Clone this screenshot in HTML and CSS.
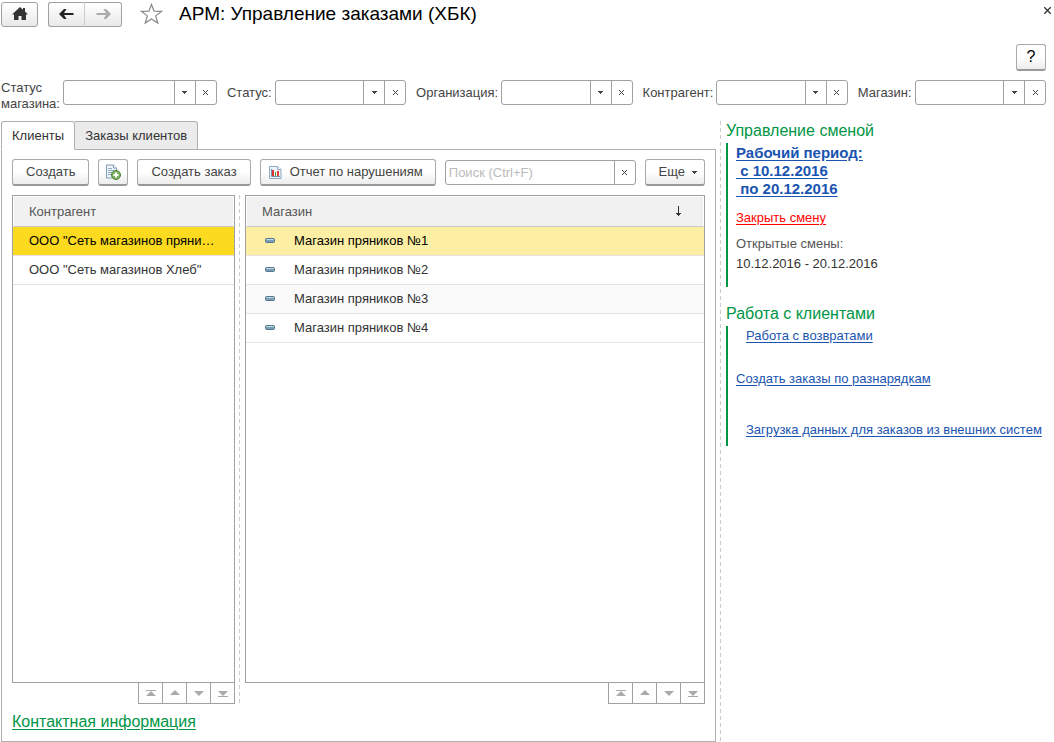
FILE: index.html
```html
<!DOCTYPE html>
<html lang="ru">
<head>
<meta charset="utf-8">
<title>АРМ: Управление заказами (ХБК)</title>
<link rel="stylesheet" href="styles.css">
</head>
<body>
<svg class="defs" aria-hidden="true">
  <symbol id="caret" viewBox="0 0 5 3"><path d="M0 0h5v1H4v1H3v1H2V2H1V1H0z"/></symbol>
  <symbol id="cross" viewBox="0 0 7 7"><path d="M1 1l5 5M6 1l-5 5" fill="none" stroke="currentColor" stroke-width="1"/></symbol>
  <symbol id="up" viewBox="0 0 10 8"><path d="M5 1l5 5H0z"/></symbol>
  <symbol id="down" viewBox="0 0 10 8"><path d="M5 7L0 2h10z"/></symbol>
  <symbol id="first" viewBox="0 0 10 8"><path d="M0 1h10v1H0zM5 2l5 5H0z"/></symbol>
  <symbol id="last" viewBox="0 0 10 8"><path d="M0 7h10v1H0zM5 7L0 2h10z"/></symbol>
  <symbol id="item" viewBox="0 0 10 5"><rect x=".5" y=".5" width="9" height="4" rx="1" fill="#7d9db5" stroke="#55768f"/><path d="M1.500 1.500h7" stroke="#c5dbe8"/></symbol>
</svg>

<header class="header">
  <button class="nav-btn home" aria-label="Домой"><svg width="16" height="14" viewBox="0 0 16 14"><path d="M8 0l3 2.700V1h2v3.500L16 7.500h-2V13H9.500V9h-3v4H2V7.500H0z" fill="#333"/></svg></button>
  <div class="nav-pair">
    <button class="nav-btn" aria-label="Назад"><svg width="15" height="12" viewBox="0 0 15 12"><path d="M0 6l5-5h2.500L5 5h9.500v2H5l2.500 4H5z" fill="#222"/></svg></button>
    <button class="nav-btn" aria-label="Вперед"><svg width="15" height="12" viewBox="0 0 15 12"><path d="M15 6l-5-5H7.500L10 5H.5v2H10l-2.500 4H10z" fill="#aaa"/></svg></button>
  </div>
  <button class="plain star" aria-label="В избранное"><svg width="23" height="22" viewBox="0 0 23 22"><path d="M11.500 1.500l2.600 6.700 7.400.2-5.800 4.500 2.100 7.200-6.300-4.200-6.300 4.200 2.100-7.200L1.500 8.400l7.400-.2z" fill="none" stroke="#888" stroke-width="1.200"/></svg></button>
  <h1 class="title">АРМ: Управление заказами (ХБК)</h1>
  <button class="plain close" aria-label="Закрыть"><svg width="9" height="9" viewBox="0 0 7 7"><use href="#cross"/></svg></button>
</header>

<div class="help-row"><button class="btn help">?</button></div>

<form class="filters">
  <label class="label-wrap" for="f1">Статус магазина:</label>
  <div class="combo combo-wide"><input id="f1" type="text"><button type="button" aria-label="Выбрать"><svg class="caret"><use href="#caret"/></svg></button><button type="button" aria-label="Очистить"><svg class="cross"><use href="#cross"/></svg></button></div>
  <label for="f2">Статус:</label>
  <div class="combo"><input id="f2" type="text"><button type="button" aria-label="Выбрать"><svg class="caret"><use href="#caret"/></svg></button><button type="button" aria-label="Очистить"><svg class="cross"><use href="#cross"/></svg></button></div>
  <label for="f3">Организация:</label>
  <div class="combo"><input id="f3" type="text"><button type="button" aria-label="Выбрать"><svg class="caret"><use href="#caret"/></svg></button><button type="button" aria-label="Очистить"><svg class="cross"><use href="#cross"/></svg></button></div>
  <label for="f4">Контрагент:</label>
  <div class="combo"><input id="f4" type="text"><button type="button" aria-label="Выбрать"><svg class="caret"><use href="#caret"/></svg></button><button type="button" aria-label="Очистить"><svg class="cross"><use href="#cross"/></svg></button></div>
  <label for="f5">Магазин:</label>
  <div class="combo"><input id="f5" type="text"><button type="button" aria-label="Выбрать"><svg class="caret"><use href="#caret"/></svg></button><button type="button" aria-label="Очистить"><svg class="cross"><use href="#cross"/></svg></button></div>
</form>

<div class="content">
  <main class="main">
    <div class="tabs" role="tablist">
      <button class="tab tab-active" role="tab" aria-selected="true">Клиенты</button>
      <button class="tab" role="tab" aria-selected="false">Заказы клиентов</button>
    </div>
    <section class="panel">
      <div class="toolbar">
        <button class="btn">Создать</button>
        <button class="btn btn-icon" aria-label="Создать копированием"><svg width="16" height="16" viewBox="0 0 16 16"><path d="M1.500 1h7l3 3v10h-10z" fill="#eef4f9" stroke="#7f9db5"/><path d="M8.500 1v3h3" fill="#fff" stroke="#7f9db5"/><path d="M3 4.500h4M3 6.500h6M3 8.500h4M3 10.500h3" stroke="#8fabc0"/><circle cx="11" cy="11" r="4.500" fill="#7db45c" stroke="#4f7f3c"/><path d="M11 8.500v5M8.500 11h5" stroke="#fff" stroke-width="2"/></svg></button>
        <button class="btn">Создать заказ</button>
        <button class="btn btn-report"><svg width="13" height="15" viewBox="0 0 13 15"><path d="M.5 1.500h8l3.500 3v9H.5z" fill="#eef4f9" stroke="#8fa9bd"/><path d="M8.500 1.500v3H12" fill="#fff" stroke="#8fa9bd"/><path d="M3 5h2v6H3z" fill="#d33"/><path d="M6 7h1v4H6z" fill="#4a9a45"/><path d="M8 6h2v5H8z" fill="#e0432f"/><path d="M2.500 4v7.500H11" fill="none" stroke="#7890a5"/></svg>Отчет по нарушениям</button>
        <div class="combo search"><input type="text" aria-label="Поиск" placeholder="Поиск (Ctrl+F)"><button aria-label="Очистить"><svg class="cross"><use href="#cross"/></svg></button></div>
        <button class="btn btn-more">Еще<svg class="caret"><use href="#caret"/></svg></button>
      </div>
      <div class="lists">
        <div class="list list-left">
          <div class="grid">
            <table>
              <thead><tr><th>Контрагент</th></tr></thead>
              <tbody>
                <tr class="current"><td>ООО "Сеть магазинов пряников"</td></tr>
                <tr><td>ООО "Сеть магазинов Хлеб"</td></tr>
              </tbody>
            </table>
          </div>
          <div class="pager">
            <button aria-label="В начало"><svg><use href="#first"/></svg></button><button aria-label="Вверх"><svg><use href="#up"/></svg></button><button aria-label="Вниз"><svg><use href="#down"/></svg></button><button aria-label="В конец"><svg><use href="#last"/></svg></button>
          </div>
        </div>
        <div class="splitter"></div>
        <div class="list list-right">
          <div class="grid">
            <table>
              <thead><tr><th><div class="sort-head">Магазин<svg width="7" height="11" viewBox="0 0 7 11"><path d="M3 0h1v7h2v1H5v1H4v1H3V9H2V8H1V7h2z" fill="#333"/></svg></div></th></tr></thead>
              <tbody>
                <tr class="marked"><td><svg class="item"><use href="#item"/></svg>Магазин пряников №1</td></tr>
                <tr><td><svg class="item"><use href="#item"/></svg>Магазин пряников №2</td></tr>
                <tr class="odd"><td><svg class="item"><use href="#item"/></svg>Магазин пряников №3</td></tr>
                <tr><td><svg class="item"><use href="#item"/></svg>Магазин пряников №4</td></tr>
              </tbody>
            </table>
          </div>
          <div class="pager">
            <button aria-label="В начало"><svg><use href="#first"/></svg></button><button aria-label="Вверх"><svg><use href="#up"/></svg></button><button aria-label="Вниз"><svg><use href="#down"/></svg></button><button aria-label="В конец"><svg><use href="#last"/></svg></button>
          </div>
        </div>
      </div>
      <a class="contact" href="#">Контактная информация</a>
    </section>
  </main>

  <div class="splitter main-splitter"></div>

  <aside class="side">
    <h2>Управление сменой</h2>
    <div class="group group-shift">
      <a class="period" href="#">Рабочий период:
 с 10.12.2016
 по 20.12.2016</a>
      <a class="danger" href="#">Закрыть смену</a>
      <p class="caption">Открытые смены:</p>
      <p>10.12.2016 - 20.12.2016</p>
    </div>
    <h2>Работа с клиентами</h2>
    <div class="group group-clients">
      <a class="indent" href="#">Работа с возвратами</a>
      <a href="#">Создать заказы по разнарядкам</a>
      <a class="indent" href="#">Загрузка данных для заказов из внешних систем</a>
    </div>
  </aside>
</div>
</body>
</html>
```
FILE: styles.css
```css
* { box-sizing: border-box; }
body {
  margin: 0;
  min-height: 100vh;
  display: flex;
  flex-direction: column;
  padding: 1px 8px 0 1px;
  background: #fff;
  color: #333;
  font: 13px/16px "Liberation Sans", Arial, sans-serif;
}
button, input { font: inherit; color: inherit; margin: 0; }
button { padding: 0; }
svg { display: block; flex: none; fill: currentColor; }
h1, h2, p { margin: 0; font-weight: normal; }
a { color: #1a54b0; text-underline-offset: 2px; }
.defs { position: absolute; width: 0; height: 0; }
.caret { width: 5px; height: 3px; }
.cross { width: 7px; height: 7px; }

.header { display: flex; align-items: center; height: 26px; }
.nav-btn {
  display: flex;
  align-items: center;
  justify-content: center;
  width: 37px;
  height: 25px;
  border: 1px solid #a0a0a0;
  border-radius: 3px;
  background: linear-gradient(#fff, #e9e9e9);
}
.nav-pair { display: flex; margin-left: 10px; }
.nav-pair .nav-btn:first-child { border-radius: 3px 0 0 3px; border-right-color: #ccc; }
.nav-pair .nav-btn:last-child { border-radius: 0 3px 3px 0; border-left: 0; }
.plain { border: 0; background: none; }
.star { margin: 0 16px 0 18px; }
.title { font-size: 19px; line-height: 24px; color: #000; }
.close { align-self: flex-start; margin: 5px -6px 0 auto; color: #333; }

.help-row { display: flex; justify-content: flex-end; padding: 17px 0 9px; }
.btn {
  display: flex;
  align-items: center;
  justify-content: center;
  height: 27px;
  padding: 0 13px;
  border: 1px solid #aaa;
  border-bottom: 2px solid #999;
  border-radius: 3px;
  background: linear-gradient(#fff 50%, #ececec);
  color: #444;
  white-space: nowrap;
}
.help { width: 30px; padding: 0; font-size: 16px; color: #000; }

.filters { display: flex; align-items: flex-start; color: #444; }
.filters label { flex: none; margin-right: 3px; line-height: 25px; white-space: nowrap; }
.filters .label-wrap { width: 59px; white-space: normal; line-height: 16px; }
.combo {
  display: flex;
  flex: 132 1 0;
  min-width: 0;
  height: 25px;
  border: 1px solid #a0a0a0;
  border-radius: 3px;
  background: #fff;
}
.filters .combo:not(:last-child) { margin-right: 10px; }
.combo-wide { flex-grow: 155; }
.combo input { flex: 1; min-width: 0; border: 0; padding: 0 3px; background: none; outline: 0; }
.combo input::placeholder { color: #bbb; opacity: 1; }
.combo button {
  display: flex;
  align-items: center;
  justify-content: center;
  width: 21px;
  border: 0;
  border-left: 1px solid #a0a0a0;
  background: none;
  color: #444;
}

.content { flex: 1; display: flex; margin-top: 9px; }
.main { flex: 1; min-width: 0; display: flex; flex-direction: column; }
.tabs { display: flex; height: 29px; margin-bottom: -1px; z-index: 1; }
.tab {
  padding: 0 10px;
  border: 1px solid #b0b0b0;
  border-left-width: 0;
  border-radius: 0 3px 0 0;
  background: #ebebeb;
}
.tab-active {
  border-left-width: 1px;
  border-bottom-color: #fff;
  border-radius: 3px 3px 0 0;
  background: #fff;
}
.panel {
  flex: 1;
  display: flex;
  flex-direction: column;
  align-items: stretch;
  padding: 9px 10px;
  border: 1px solid #b0b0b0;
}
.toolbar { display: flex; align-items: center; gap: 9px; }
.btn-icon { width: 30px; padding: 0; }
.btn-report { padding: 0 12px 0 8px; gap: 8px; }
.btn-more { gap: 7px; padding: 0 7px 0 13px; }
.lists { flex: 1; display: flex; margin-top: 9px; }
.list { display: flex; flex-direction: column; min-width: 0; }
.list-left { flex: 223 1 0; }
.list-right { flex: 460 1 0; }
.splitter {
  flex: none;
  width: 1px;
  margin: 0 5px 0 4px;
  background: repeating-linear-gradient(#ccc 0 4px, #fff 4px 7px);
}
.grid { flex: 1; border: 1px solid #a0a0a0; }
table { width: 100%; table-layout: fixed; border-collapse: separate; border-spacing: 0; }
th {
  height: 31px;
  padding: 0 15px;
  border: 1px solid #fff;
  border-bottom: 1px solid #c8c8c8;
  background: #f1f1f1;
  color: #555;
  font-weight: normal;
  text-align: left;
}
td {
  height: 29px;
  padding: 0 16px;
  border-bottom: 1px solid #e4e4e4;
  overflow: hidden;
  white-space: nowrap;
  text-overflow: ellipsis;
}
.sort-head { display: flex; justify-content: space-between; padding-right: 6px; align-items: center; }
.item { display: inline-block; width: 10px; height: 5px; margin: 0 19px 2px 3px; vertical-align: baseline; }
.current td { background: #fbda20; color: #000; }
.marked td { background: #fcefa3; color: #000; }
.odd td { background: #fafafa; }
.pager { display: flex; align-self: flex-end; height: 22px; margin-top: -1px; border: 1px solid #a0a0a0; }
.pager button {
  display: flex;
  align-items: center;
  justify-content: center;
  width: 24px;
  border: 0;
  border-right: 1px solid #a0a0a0;
  background: none;
  color: #aaa;
}
.pager button:last-child { width: 23px; border-right: 0; }
.pager svg { width: 10px; height: 8px; }
.contact { align-self: flex-start; margin-top: 8px; color: #009646; font-size: 16px; line-height: 20px; }

.main-splitter { margin: 0 5px 0 4px; }
.side { flex: none; width: 320px; }
.side h2 { color: #009646; font-size: 16px; line-height: 20px; }
.group {
  display: flex;
  flex-direction: column;
  align-items: flex-start;
  padding-left: 8px;
  border-left: 2px solid #009646;
  white-space: nowrap;
}
.group-shift { height: 144px; margin: 2px 0 17px; padding-top: 1px; }
.period { white-space: pre; font-weight: bold; font-size: 15px; line-height: 18px; }
.danger { color: #f00; margin: 12px 0 10px; }
.caption { color: #555; margin-bottom: 4px; }
.group-clients { height: 120px; margin-top: 2px; }
.indent { margin-left: 10px; }
.group-clients a:nth-child(1) { margin-top: 2px; }
.group-clients a:nth-child(2) { margin-top: 27px; }
.group-clients a:nth-child(3) { margin-top: 35px; }
```
